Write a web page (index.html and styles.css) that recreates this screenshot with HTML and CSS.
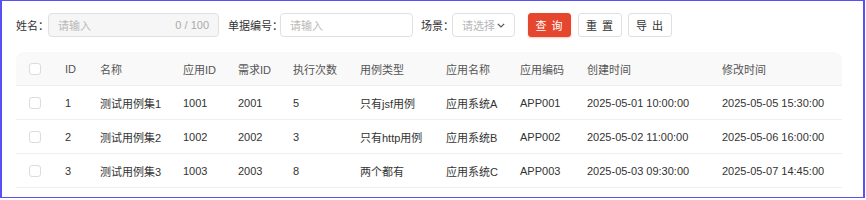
FILE: index.html
```html
<!DOCTYPE html>
<html lang="zh">
<head>
<meta charset="utf-8">
<link rel="stylesheet" href="styles.css">
</head>
<body>
<div class="frame">
  <div class="search">
    <label class="lbl lbl-1">姓名：</label>
    <div class="input input-name"><span class="ph">请输入</span><span class="count">0 / 100</span></div>
    <label class="lbl lbl-2">单据编号：</label>
    <div class="input input-no"><span class="ph">请输入</span></div>
    <label class="lbl lbl-3">场景：</label>
    <div class="input input-sel"><span class="ph">请选择</span>
      <svg class="chev" width="8" height="5" viewBox="0 0 8 5"><path d="M0.8 0.8 L4 4 L7.2 0.8" fill="none" stroke="#555" stroke-width="1.2"/></svg>
    </div>
    <button class="btn btn-primary">查 询</button>
    <button class="btn btn-reset">重 置</button>
    <button class="btn btn-export">导 出</button>
  </div>
  <table class="grid">
    <colgroup>
      <col style="width:37px"><col style="width:35px"><col style="width:83px"><col style="width:55px"><col style="width:55px"><col style="width:67px"><col style="width:86px"><col style="width:74px"><col style="width:67px"><col style="width:135px"><col>
    </colgroup>
    <thead>
      <tr><th><span class="cb"></span></th><th>ID</th><th>名称</th><th>应用ID</th><th>需求ID</th><th>执行次数</th><th>用例类型</th><th>应用名称</th><th>应用编码</th><th>创建时间</th><th>修改时间</th></tr>
    </thead>
    <tbody>
      <tr><td><span class="cb"></span></td><td>1</td><td>测试用例集1</td><td>1001</td><td>2001</td><td>5</td><td>只有jsf用例</td><td>应用系统A</td><td>APP001</td><td>2025-05-01 10:00:00</td><td>2025-05-05 15:30:00</td></tr>
      <tr><td><span class="cb"></span></td><td>2</td><td>测试用例集2</td><td>1002</td><td>2002</td><td>3</td><td>只有http用例</td><td>应用系统B</td><td>APP002</td><td>2025-05-02 11:00:00</td><td>2025-05-06 16:00:00</td></tr>
      <tr><td><span class="cb"></span></td><td>3</td><td>测试用例集3</td><td>1003</td><td>2003</td><td>8</td><td>两个都有</td><td>应用系统C</td><td>APP003</td><td>2025-05-03 09:30:00</td><td>2025-05-07 14:45:00</td></tr>
    </tbody>
  </table>
</div>
</body>
</html>
```
FILE: styles.css
```css
html, body { margin: 0; padding: 0; background: #fff; }
body {
  font-family: "Liberation Sans", "Noto Sans CJK SC", sans-serif;
  font-size: 11px;
  color: #333;
}
.frame {
  box-sizing: border-box;
  width: 865px;
  height: 198px;
  border: 1px solid #5a4ff3;
  border-left-width: 2px;
  border-right-width: 2px;
  padding: 12px 0 0 14px;
}
.search {
  display: flex;
  align-items: center;
  height: 24px;
}
.lbl { color: #333; white-space: nowrap; }
.lbl-1 { margin-right: -1px; }
.lbl-2 { margin-left: 9px; margin-right: -3px; }
.lbl-3 { margin-left: 8px; margin-right: -2px; }
.input {
  box-sizing: border-box;
  height: 24px;
  border: 1px solid #e0e0e0;
  border-radius: 4px;
  display: flex;
  align-items: center;
  padding: 0 9px;
  background: #fff;
}
.ph { color: #b8b8b8; }
.input-name { width: 171px; background: #f6f6f6; justify-content: space-between; }
.count { color: #aaa; }
.input-no { width: 133px; }
.input-sel { width: 63px; justify-content: space-between; padding-right: 9px; }
.chev { display: block; }
.btn {
  box-sizing: border-box;
  height: 24px;
  width: 44px;
  border: 1px solid #e0e0e0;
  border-radius: 3px;
  background: #fff;
  color: #333;
  font-family: inherit;
  font-size: 11px;
  padding: 0;
  letter-spacing: 1px;
}
.btn-primary {
  margin-left: 13px;
  background: #e4472e;
  border-color: #e4472e;
  color: #fff;
  width: 43px;
  box-shadow: 0 1px 2px rgba(228,71,46,0.3);
}
.btn-reset { margin-left: 7px; }
.btn-export { margin-left: 6px; }
.grid {
  margin-top: 15px;
  width: 826px;
  table-layout: fixed;
  border-collapse: separate;
  border-spacing: 0;
}
.grid th, .grid td {
  text-align: left;
  padding: 0 0 0 12px;
  white-space: nowrap;
  overflow: hidden;
  border-bottom: 1px solid #efefef;
}
.grid th {
  height: 33px;
  background: #f9f9f9;
  font-weight: normal;
  color: #555;
}
.grid th:first-child { border-top-left-radius: 8px; }
.grid th:last-child { border-top-right-radius: 8px; }
.grid td { height: 33px; color: #333; }
.grid th:first-child, .grid td:first-child { padding-left: 13px; }
.cb {
  display: inline-block;
  box-sizing: border-box;
  width: 12px;
  height: 12px;
  border: 1px solid #dcdcdc;
  border-radius: 3px;
  background: #fff;
  vertical-align: middle;
}
```
